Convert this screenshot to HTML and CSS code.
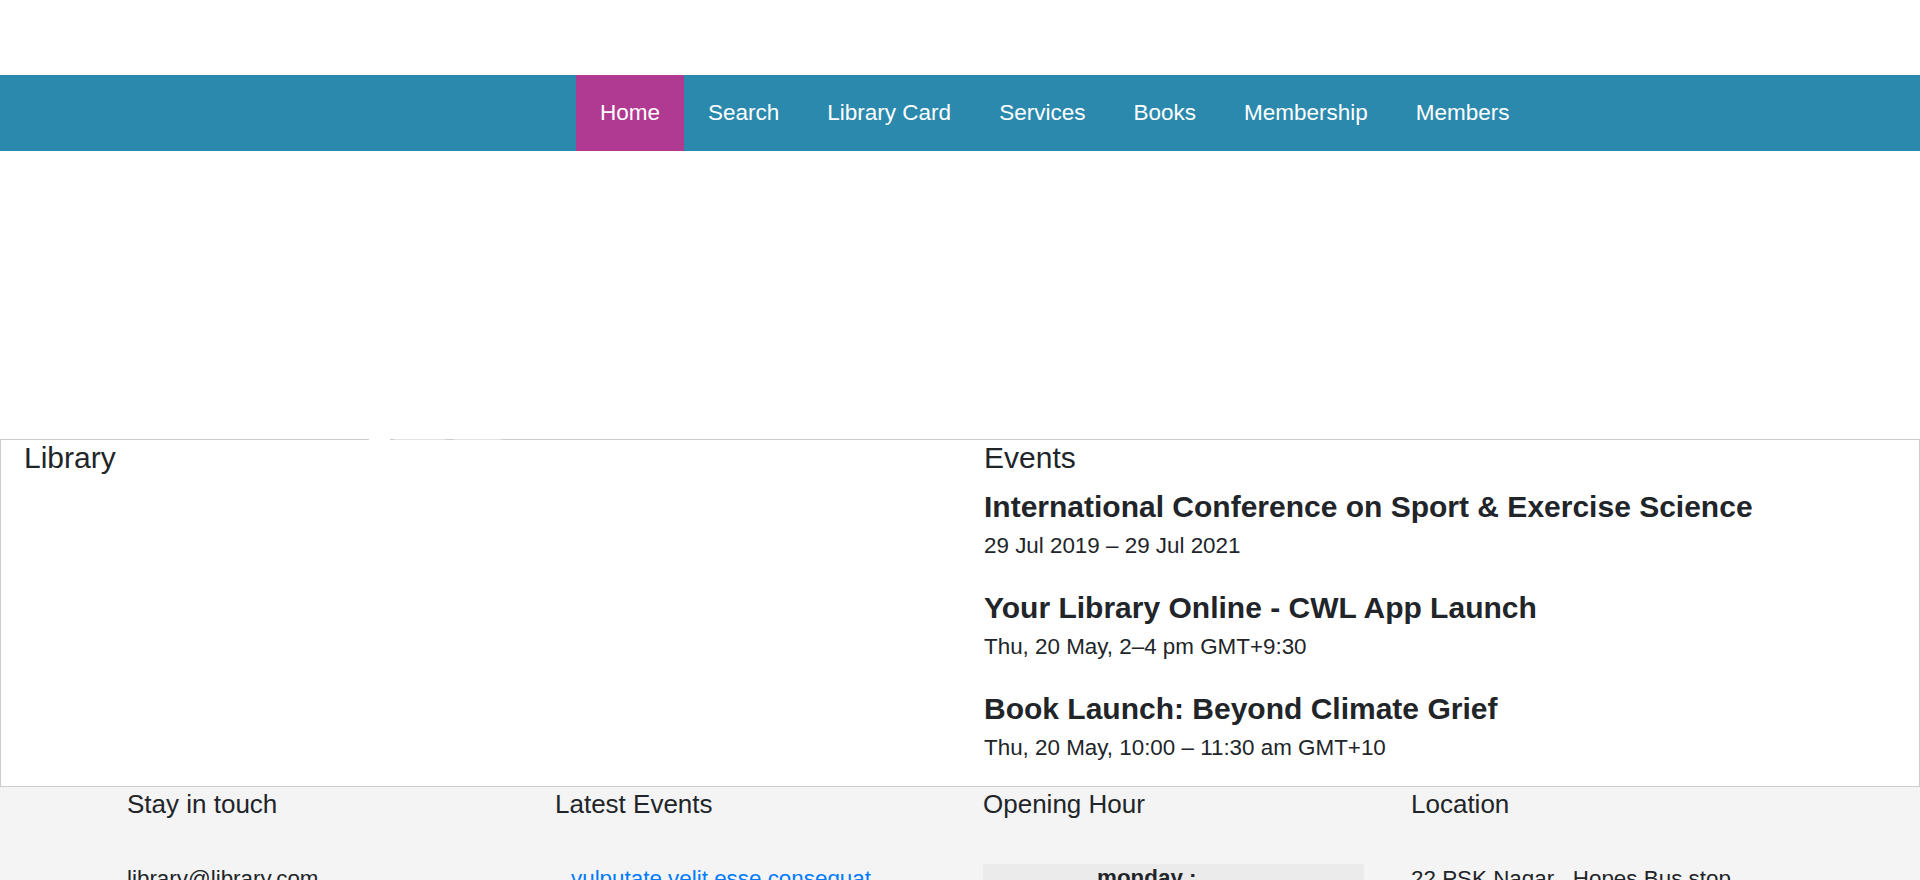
FILE: index.html
```html
<!DOCTYPE html>
<html lang="en">
<head>
<meta charset="utf-8">
<title>Library</title>
<link rel="stylesheet" href="styles.css">
</head>
<body>
<header class="topbar"></header>
<nav class="mainnav">
  <ul class="menu">
    <li class="menu-item active"><a href="#">Home</a></li>
    <li class="menu-item"><a href="#">Search</a></li>
    <li class="menu-item"><a href="#">Library Card</a></li>
    <li class="menu-item"><a href="#">Services</a></li>
    <li class="menu-item"><a href="#">Books</a></li>
    <li class="menu-item"><a href="#">Membership</a></li>
    <li class="menu-item"><a href="#">Members</a></li>
  </ul>
</nav>
<section class="hero"></section>
<section class="panel">
  <div class="panel-col">
    <h3 class="panel-title">Library</h3>
  </div>
  <div class="panel-col">
    <h3 class="panel-title">Events</h3>
    <div class="event-list">
      <div class="event">
        <h4 class="event-title">International Conference on Sport &amp; Exercise Science</h4>
        <p class="event-date">29 Jul 2019 – 29 Jul 2021</p>
      </div>
      <div class="event">
        <h4 class="event-title">Your Library Online - CWL App Launch</h4>
        <p class="event-date">Thu, 20 May, 2–4 pm GMT+9:30</p>
      </div>
      <div class="event">
        <h4 class="event-title">Book Launch: Beyond Climate Grief</h4>
        <p class="event-date">Thu, 20 May, 10:00 – 11:30 am GMT+10</p>
      </div>
    </div>
  </div>
  <div class="border-mask">
    <span class="mask-gap"></span>
    <span class="mask-dim mask-a"></span>
    <span class="mask-dark"></span>
    <span class="mask-dim mask-b"></span>
  </div>
</section>
<footer class="site-footer">
  <div class="footer-grid">
    <div class="footer-col">
      <h4 class="footer-title">Stay in touch</h4>
      <p class="footer-text">library@library.com</p>
      <p class="footer-text">+91 98765 43210</p>
    </div>
    <div class="footer-col">
      <h4 class="footer-title">Latest Events</h4>
      <ul class="footer-links">
        <li><a href="#">vulputate velit esse consequat</a></li>
        <li><a href="#">illum dolore eu feugiat nulla</a></li>
        <li><a href="#">facilisis at vero eros</a></li>
      </ul>
    </div>
    <div class="footer-col">
      <h4 class="footer-title">Opening Hour</h4>
      <table class="hours">
        <tr class="hours-row"><th class="hours-day">monday :</th></tr>
        <tr class="hours-row"><td class="hours-time">9am - 6pm</td></tr>
      </table>
    </div>
    <div class="footer-col">
      <h4 class="footer-title">Location</h4>
      <p class="footer-text">22 PSK Nagar , Hopes Bus stop</p>
      <p class="footer-text">Coimbatore</p>
    </div>
  </div>
</footer>
</body>
</html>
```
FILE: styles.css
```css
html, body {
  margin: 0;
  padding: 0;
}
body {
  font-family: "Liberation Sans", Arial, sans-serif;
  color: #212529;
  background: #ffffff;
}
.topbar {
  height: 75px;
}
.mainnav {
  background: #2b89ad;
  height: 76px;
}
.menu {
  list-style: none;
  margin: 0 0 0 576px;
  padding: 0;
  display: flex;
  height: 76px;
}
.menu-item a {
  display: block;
  padding: 0 24px;
  line-height: 76px;
  font-size: 22.5px;
  color: #ffffff;
  text-decoration: none;
}
.menu-item.active a {
  background: #b03a91;
}
.hero {
  height: 288px;
}
.panel {
  position: relative;
  display: grid;
  grid-template-columns: 960px 958px;
  border: 1px solid #cccccc;
  padding-bottom: 21px;
}
.panel-col {
  padding-left: 23px;
}
.panel-title {
  margin: 0;
  font-size: 30px;
  line-height: 36px;
  font-weight: 400;
}
.event-list {
  margin-top: 13px;
  display: flex;
  flex-direction: column;
  gap: 27px;
}
.event-title {
  margin: 0;
  font-size: 30px;
  line-height: 36px;
  font-weight: 700;
}
.event-date {
  margin: 4px 0 0;
  font-size: 22.4px;
  line-height: 34px;
}
.border-mask {
  position: absolute;
  top: -1px;
  left: 368px;
  height: 1px;
  display: flex;
}
.mask-gap {
  width: 21px;
  background: #ffffff;
}
.mask-dim {
  background: #e4e4e4;
}
.mask-a {
  width: 51px;
  margin-left: 4px;
}
.mask-dark {
  width: 9px;
}
.mask-b {
  width: 47px;
}
.site-footer {
  background: #f4f4f4;
  height: 300px;
  padding-top: 2px;
}
.footer-grid {
  display: grid;
  grid-template-columns: repeat(4, 428px);
  padding-left: 127px;
}
.footer-title {
  margin: 0;
  font-size: 26px;
  line-height: 31px;
  font-weight: 400;
}
.footer-text {
  margin: 42px 0 0;
  font-size: 22.4px;
  line-height: 34px;
}
.footer-text + .footer-text {
  margin-top: 8px;
}
.footer-links {
  list-style: none;
  margin: 42px 0 0;
  padding-left: 16px;
  font-size: 22.4px;
  line-height: 34px;
}
.footer-links a {
  color: #007bff;
  text-decoration: none;
}
.hours {
  margin-top: 44px;
  width: 381px;
  border-collapse: collapse;
  font-size: 22.4px;
}
.hours-row {
  background: #ebebeb;
}
.hours-day {
  text-align: left;
  padding: 1px 0 6px 114px;
  font-weight: 700;
}
.hours-time {
  padding: 6px 0 6px 114px;
}
```
